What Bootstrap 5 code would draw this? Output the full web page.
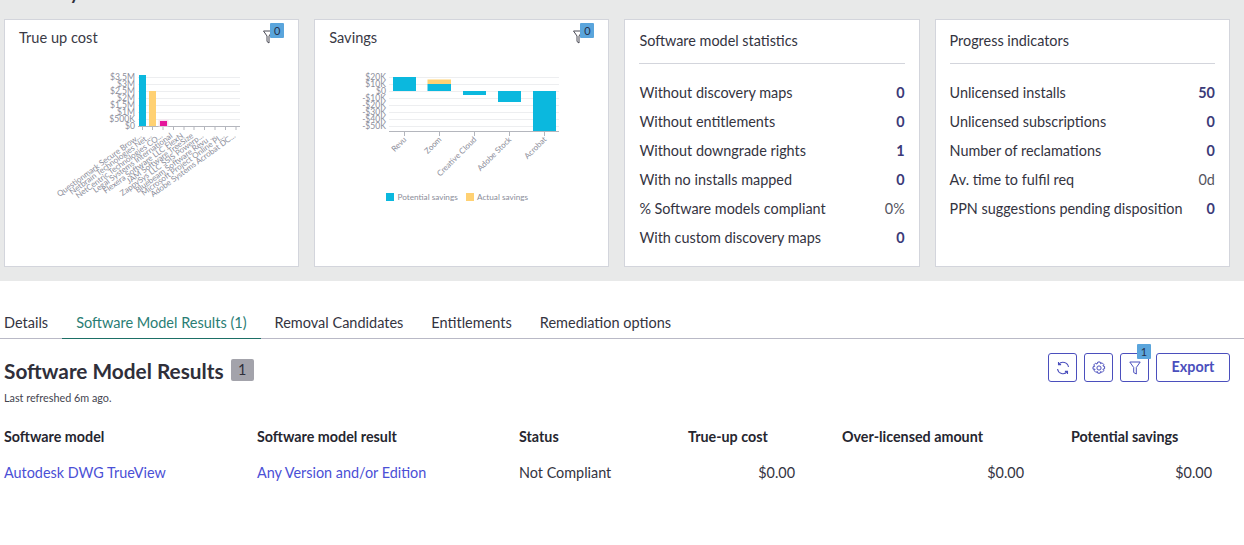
<!DOCTYPE html>
<html lang="en">
<head>
    <meta charset="UTF-8">
    <title>Software Model Results</title>
    <link rel="stylesheet" href="https://cdn.jsdelivr.net/npm/bootstrap@5.3.0/dist/css/bootstrap.min.css">
    <style>
        body { font-family: Lato, "Liberation Sans", sans-serif; font-size: 14.4px; color: #2f2f3a; background: #fff; overflow: hidden; }
        .top-band { background: #e8e9e9; height: 281px; padding: 19px 14px 0 4px; }
        .page-title { font-size: 18px; font-weight: 700; line-height: 26px; height: 0; margin: -39px 0 39px 0; color: #2f2f3a; }
        .panel-grid { display: grid; grid-template-columns: repeat(4, 295.3px); column-gap: 14.9px; }
        .panel { height: 248px; background: #fff; border: 1px solid #d3d5dc; position: relative; }
        .chart-title { font-size: 14.6px; line-height: 20px; padding: 8px 14px 0; height: 40px; color: #3a3a46; }
        .chart-svg { display: block; width: 293px; height: 206px; }
        .chart-svg text { font-family: Lato, "Liberation Sans", sans-serif; font-size: 8.6px; fill: #8b8d9a; }
        .chart-svg .axis-text { font-size: 8px; }
        .chart-svg .legend-text { font-size: 8.2px; }
        .filter-mark { position: absolute; top: 3px; right: 13px; width: 22px; height: 21px; }
        .filter-mark svg { position: absolute; left: 0; top: 7px; }
        .count-tag { position: absolute; background: #5aa5dc; color: #26304a; font-size: 11px; line-height: 15px; height: 15px; width: 14px; text-align: center; border-radius: 1px; }
        .filter-mark .count-tag { left: 7px; top: 0; }
        .stats-body { padding: 11px 14px 0; }
        .stats-title { font-size: 14.4px; line-height: 20px; padding-bottom: 12px; border-bottom: 1px solid #d3d5dc; margin-bottom: 14px; color: #34343f; }
        .stat-line { height: 29px; line-height: 29px; font-size: 14.4px; color: #34343f; }
        .stat-num { font-weight: 700; color: #3b3a78; }
        .stat-plain { color: #55555f; }
        .tab-bar { height: 58px; padding-top: 24px; border-bottom: 1px solid #b9b9c6; display: flex; padding-left: 4px; }
        .tab-item { padding: 0 14px; line-height: 35px; height: 34px; color: #34343f; font-size: 14.5px; }
        .tab-item:first-child { padding-left: 0; }
        .tab-active { color: #2a7d74; border-bottom: 1.5px solid #1d6f66; }
        .results-head { padding: 14px 14px 0 4px; display: flex; justify-content: space-between; }
        .results-title { font-size: 20.8px; font-weight: 700; line-height: 36px; color: #2f2f3a; }
        .results-count { display: inline-block; background: #a3a3ab; color: #2f2f3a; font-size: 14.4px; font-weight: 400; line-height: 22px; height: 22px; width: 23px; text-align: center; border-radius: 2px; margin-left: 2px; vertical-align: 4px; }
        .refresh-note { font-size: 10.8px; line-height: 14px; color: #44444f; margin-top: 2px; padding-left: 4px; }
        .tool-row { gap: 7px; }
        .tool-btn { width: 29px; height: 29px; border: 1px solid #4b4fbd; border-radius: 3px; background: #fff; padding: 0; display: flex; align-items: center; justify-content: center; position: relative; }
        .tool-btn .count-tag { right: -3px; top: -10px; }
        .export-btn { width: 74px; height: 29px; border: 1px solid #4b4fbd; border-radius: 3px; background: #fff; color: #4b4fbd; font-weight: 700; font-size: 14.4px; line-height: 24px; padding: 0 0 2px; }
        .results-table { width: 1244px; table-layout: fixed; border-collapse: collapse; margin-top: 14px; }
        .results-table th { font-weight: 700; height: 36px; font-size: 14.3px; color: #26262f; padding: 0; }
        .results-table td { height: 36px; font-size: 14.4px; padding: 0; color: #34343f; }
        .results-table a { color: #4b50d6; text-decoration: none; }
        .cell-first { padding-left: 4px !important; }
        .num-a { padding-right: 47px !important; }
        .num-c { padding-right: 32px !important; }
    </style>
</head>
<body>
<div class="top-band">
    <div class="page-title">Summary</div>
    <div class="panel-grid">
        <div class="panel">
            <div class="chart-title">True up cost</div>
            <div class="filter-mark">
                <svg width="10" height="14" viewBox="0 0 10 14" fill="#fff" stroke="#4a4a55" stroke-width="1"><path d="M.5 1h9L6 6v7L4 11.5V6z"/></svg>
                <span class="count-tag">0</span>
            </div>
            <svg class="chart-svg" viewBox="0 0 293 206">
                <g transform="translate(-5,-60)">
                    <g stroke="#edeef0" stroke-width="1">
                        <path d="M138 77.5H240M138 84.5H240M138 91.5H240M138 98.5H240M138 105.5H240M138 112.5H240M138 119.5H240"/>
                    </g>
                    <path d="M138 126.5H240" stroke="#b4b6bd"/>
                    <path d="M142.5 127v3M152.5 127v3M163 127v3M173.500 127v3M184 127v3M194 127v3M204.500 127v3M215 127v3M225.500 127v3M236 127v3" stroke="#b4b6bd"/>
                    <rect x="139" y="75" width="7" height="51" fill="#0bb8de"/>
                    <rect x="149" y="91" width="7" height="35" fill="#ffd173"/>
                    <rect x="158.500" y="119.500" width="10" height="7" fill="#f7e3ef"/>
                    <rect x="160" y="121" width="7" height="5" fill="#e5159b"/>
                    <g text-anchor="end">
                        <text x="135" y="80">$3.5M</text>
                        <text x="135" y="87">$3M</text>
                        <text x="135" y="94">$2.5M</text>
                        <text x="135" y="101">$2M</text>
                        <text x="135" y="108">$1.5M</text>
                        <text x="135" y="115">$1M</text>
                        <text x="135" y="122">$500K</text>
                        <text x="135" y="129">$0</text>
                        <text class="axis-text" transform="translate(142,137) rotate(-36)">Questionmark Secure Brow...</text>
                        <text class="axis-text" transform="translate(152,137) rotate(-36)">Netbrain Technologies Net...</text>
                        <text class="axis-text" transform="translate(163,137) rotate(-36)">NetCentric Technologies CO...</text>
                        <text class="axis-text" transform="translate(173,137) rotate(-36)">Legal Systems International</text>
                        <text class="axis-text" transform="translate(184,137) rotate(-36)">Flexera Software LLC FlexN</text>
                        <text class="axis-text" transform="translate(194,137) rotate(-36)">JAM Software TreeSize</text>
                        <text class="axis-text" transform="translate(204,137) rotate(-36)">ZappySys LLC SSIS Powerp...</text>
                        <text class="axis-text" transform="translate(215,137) rotate(-36)">Bluebeam Software Revu ...</text>
                        <text class="axis-text" transform="translate(225,137) rotate(-36)">Microsoft Project Online Pl...</text>
                        <text class="axis-text" transform="translate(236,137) rotate(-36)">Adobe Systems Acrobat DC...</text>
                    </g>
                </g>
            </svg>
        </div>
        <div class="panel">
            <div class="chart-title">Savings</div>
            <div class="filter-mark">
                <svg width="10" height="14" viewBox="0 0 10 14" fill="#fff" stroke="#4a4a55" stroke-width="1"><path d="M.5 1h9L6 6v7L4 11.5V6z"/></svg>
                <span class="count-tag">0</span>
            </div>
            <svg class="chart-svg" viewBox="0 0 293 206">
                <g transform="translate(-315,-60)">
                    <path d="M389 77.500H559M389 84.500H559M389 91.500H559M389 98.500H559M389 105.500H559M389 112.500H559M389 119.500H559M389 126.500H559" stroke="#edeef0"/>
                    <path d="M389 131.500H559" stroke="#b4b6bd"/>
                    <path d="M404.500 132v4M439.500 132v4M474.500 132v4M509.500 132v4M544.500 132v4" stroke="#b4b6bd"/>
                    <rect x="393" y="77" width="23" height="14" fill="#0bb8de"/>
                    <rect x="427.500" y="79.500" width="23.500" height="4.500" fill="#ffd173"/>
                    <rect x="427.500" y="84" width="23.500" height="7" fill="#0bb8de"/>
                    <rect x="463" y="91" width="23" height="4" fill="#0bb8de"/>
                    <rect x="498" y="91" width="23" height="11" fill="#0bb8de"/>
                    <rect x="533" y="91" width="23" height="40" fill="#0bb8de"/>
                    <g text-anchor="end">
                        <text x="386" y="80">$20K</text>
                        <text x="386" y="87">$10K</text>
                        <text x="386" y="94">$0</text>
                        <text x="386" y="101">-$10K</text>
                        <text x="386" y="108">-$20K</text>
                        <text x="386" y="115">-$30K</text>
                        <text x="386" y="122">-$40K</text>
                        <text x="386" y="129">-$50K</text>
                        <text class="axis-text" transform="translate(407,140) rotate(-45)">Revu</text>
                        <text class="axis-text" transform="translate(442,140) rotate(-45)">Zoom</text>
                        <text class="axis-text" transform="translate(477,140) rotate(-45)">Creative Cloud</text>
                        <text class="axis-text" transform="translate(512,140) rotate(-45)">Adobe Stock</text>
                        <text class="axis-text" transform="translate(547,140) rotate(-45)">Acrobat</text>
                    </g>
                    <rect x="386" y="193" width="8" height="8" fill="#0bb8de"/>
                    <text class="legend-text" x="397.500" y="200">Potential savings</text>
                    <rect x="466" y="193" width="8" height="8" fill="#ffd173"/>
                    <text class="legend-text" x="477" y="200">Actual savings</text>
                </g>
            </svg>
        </div>
        <div class="panel">
            <div class="stats-body">
                <div class="stats-title">Software model statistics</div>
                <div class="stat-line d-flex justify-content-between"><span>Without discovery maps</span><span class="stat-num">0</span></div>
                <div class="stat-line d-flex justify-content-between"><span>Without entitlements</span><span class="stat-num">0</span></div>
                <div class="stat-line d-flex justify-content-between"><span>Without downgrade rights</span><span class="stat-num">1</span></div>
                <div class="stat-line d-flex justify-content-between"><span>With no installs mapped</span><span class="stat-num">0</span></div>
                <div class="stat-line d-flex justify-content-between"><span>% Software models compliant</span><span class="stat-plain">0%</span></div>
                <div class="stat-line d-flex justify-content-between"><span>With custom discovery maps</span><span class="stat-num">0</span></div>
            </div>
        </div>
        <div class="panel">
            <div class="stats-body">
                <div class="stats-title">Progress indicators</div>
                <div class="stat-line d-flex justify-content-between"><span>Unlicensed installs</span><span class="stat-num">50</span></div>
                <div class="stat-line d-flex justify-content-between"><span>Unlicensed subscriptions</span><span class="stat-num">0</span></div>
                <div class="stat-line d-flex justify-content-between"><span>Number of reclamations</span><span class="stat-num">0</span></div>
                <div class="stat-line d-flex justify-content-between"><span>Av. time to fulfil req</span><span class="stat-plain">0d</span></div>
                <div class="stat-line d-flex justify-content-between"><span>PPN suggestions pending disposition</span><span class="stat-num">0</span></div>
            </div>
        </div>
    </div>
</div>

<div class="tab-bar">
    <div class="tab-item">Details</div>
    <div class="tab-item tab-active">Software Model Results (1)</div>
    <div class="tab-item">Removal Candidates</div>
    <div class="tab-item">Entitlements</div>
    <div class="tab-item">Remediation options</div>
</div>

<div class="results-head">
    <div class="results-title">Software Model Results <span class="results-count">1</span></div>
    <div class="d-flex tool-row">
        <button class="tool-btn" type="button" aria-label="Refresh">
            <svg width="14" height="14" viewBox="0 0 14 14" fill="none" stroke="#4b4fbd" stroke-width="1.1"><path d="M12.500 6A5.600 5.600 0 0 0 2.700 3.300M1.500 8a5.600 5.600 0 0 0 9.800 2.700"/><path d="M2.500 1v2.600h2.600M11.500 13v-2.600H8.900"/></svg>
        </button>
        <button class="tool-btn" type="button" aria-label="Settings">
            <svg width="14" height="14" viewBox="0 0 14 14" fill="none" stroke="#4b4fbd" stroke-width="1"><circle cx="7" cy="7" r="2.100"/><path d="M5.800 1h2.400l.4 1.700 1.500-.9 1.700 1.700-.9 1.500 1.700.4v2.400l-1.700.4.900 1.500-1.700 1.700-1.500-.9-.4 1.700H5.800l-.4-1.700-1.500.9-1.700-1.700.9-1.500L1 8.200V5.800l1.700-.4-.9-1.500 1.700-1.700 1.500.9z"/></svg>
        </button>
        <button class="tool-btn" type="button" aria-label="Filter">
            <svg width="12" height="14" viewBox="0 0 12 14" fill="none" stroke="#4b4fbd" stroke-width="1"><path d="M.800 1h10.400L7.300 6.500V13L4.700 11.500v-5z"/></svg>
            <span class="count-tag">1</span>
        </button>
        <button class="export-btn" type="button">Export</button>
    </div>
</div>
<div class="refresh-note">Last refreshed 6m ago.</div>

<table class="results-table">
    <colgroup>
        <col style="width: 257px"><col style="width: 262px"><col style="width: 169px"><col style="width: 154px"><col style="width: 229px"><col style="width: 173px">
    </colgroup>
    <thead>
    <tr>
        <th class="cell-first">Software model</th>
        <th>Software model result</th>
        <th>Status</th>
        <th>True-up cost</th>
        <th>Over-licensed amount</th>
        <th>Potential savings</th>
    </tr>
    </thead>
    <tbody>
    <tr>
        <td class="cell-first"><a href="#">Autodesk DWG TrueView</a></td>
        <td><a href="#">Any Version and/or Edition</a></td>
        <td>Not Compliant</td>
        <td class="text-end num-a">$0.00</td>
        <td class="text-end num-a">$0.00</td>
        <td class="text-end num-c">$0.00</td>
    </tr>
    </tbody>
</table>
</body>
</html>
